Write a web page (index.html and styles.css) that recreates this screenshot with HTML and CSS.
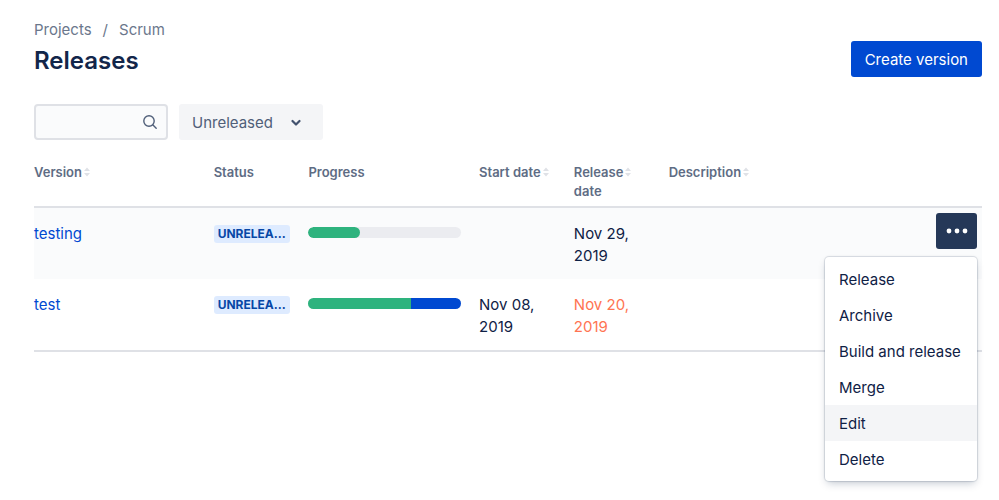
FILE: index.html
```html
<!DOCTYPE html>
<html lang="en">
<head>
<meta charset="utf-8">
<title>Releases</title>
<link rel="stylesheet" href="styles.css">
</head>
<body>
<svg class="sprite" aria-hidden="true">
  <symbol id="sort" viewBox="0 0 8 10"><path d="M4 0.5 7 4H1zM4 9.5 1 6h6z" fill="currentColor"/></symbol>
</svg>
<main class="page">
  <header class="page-header">
    <div>
      <nav class="breadcrumbs" aria-label="Breadcrumbs">
        <a href="#">Projects</a><span>/</span><a href="#">Scrum</a>
      </nav>
      <h1>Releases</h1>
    </div>
    <button class="primary" type="button">Create version</button>
  </header>

  <div class="filters">
    <div class="search">
      <input type="search" aria-label="Search versions">
      <svg width="16" height="16" viewBox="0 0 16 16" aria-hidden="true"><circle cx="7" cy="7" r="5.2"/><path d="M11 11 14.2 14.2"/></svg>
    </div>
    <div class="status-filter">
      <select aria-label="Version status"><option>Unreleased</option></select>
      <svg width="10" height="8" viewBox="0 0 10 8" aria-hidden="true"><path d="M1.5 2 5 5.5 8.5 2"/></svg>
    </div>
  </div>

  <table>
    <thead>
      <tr>
        <th class="wide">Version<svg class="sort"><use href="#sort"/></svg></th>
        <th class="narrow">Status</th>
        <th class="wide">Progress</th>
        <th class="narrow nowrap">Start date<svg class="sort"><use href="#sort"/></svg></th>
        <th class="narrow">Release<svg class="sort"><use href="#sort"/></svg> date</th>
        <th>Description<svg class="sort"><use href="#sort"/></svg></th>
        <th class="narrow" aria-label="Actions"></th>
      </tr>
    </thead>
    <tbody>
      <tr class="active">
        <td><a href="#">testing</a></td>
        <td><span class="lozenge">UNRELEA...</span></td>
        <td><div class="progress"><span class="done round" style="width:34%"></span></div></td>
        <td></td>
        <td>Nov 29, 2019</td>
        <td></td>
        <td class="actions">
          <div class="menu-anchor">
            <button class="more" type="button" aria-label="More actions" aria-expanded="true">
              <svg width="22" height="6" viewBox="0 0 22 6" aria-hidden="true"><circle cx="3" cy="3" r="2.4"/><circle cx="11" cy="3" r="2.4"/><circle cx="19" cy="3" r="2.4"/></svg>
            </button>
            <div class="menu" role="menu">
              <button type="button" role="menuitem">Release</button>
              <button type="button" role="menuitem">Archive</button>
              <button type="button" role="menuitem">Build and release</button>
              <button type="button" role="menuitem">Merge</button>
              <button type="button" role="menuitem" class="selected">Edit</button>
              <button type="button" role="menuitem">Delete</button>
            </div>
          </div>
        </td>
      </tr>
      <tr>
        <td><a href="#">test</a></td>
        <td><span class="lozenge">UNRELEA...</span></td>
        <td><div class="progress"><span class="done" style="width:67%"></span><span class="doing" style="width:33%"></span></div></td>
        <td>Nov 08, 2019</td>
        <td class="overdue">Nov 20, 2019</td>
        <td></td>
        <td></td>
      </tr>
    </tbody>
  </table>
</main>
</body>
</html>
```
FILE: styles.css
```css
* { box-sizing: border-box; }
body {
  margin: 0;
  background: #fff;
  color: #0f2145;
  font: 15px/22px Inter, "Liberation Sans", sans-serif;
}
button, input, select { font: inherit; }
button { border: 0; cursor: pointer; }
a { color: #0049d1; text-decoration: none; }
.sprite { position: absolute; width: 0; height: 0; }

.page { min-height: 100vh; padding: 19px 17px 18px 34px; }
.page-header { display: flex; justify-content: space-between; align-items: flex-end; }
.breadcrumbs { display: flex; gap: 11px; color: #6b778c; }
.breadcrumbs a { color: inherit; }
h1 { margin: 3px 0 0; font-size: 24px; line-height: 33px; font-weight: 600; color: #12264a; }
.primary {
  height: 36px;
  padding: 2px 14px 0;
  border-radius: 3px;
  background: #0049d1;
  color: #fff;
}

.filters { display: flex; gap: 11px; margin-top: 27px; }
.search { position: relative; width: 134px; height: 36px; }
.search input {
  width: 100%;
  height: 100%;
  padding: 0 32px 0 8px;
  border: 2px solid #dfe1e6;
  border-radius: 4px;
  background: #fafbfc;
  color: inherit;
  appearance: none;
}
.search svg {
  position: absolute;
  right: 10px;
  top: 10px;
  fill: none;
  stroke: #505f79;
  stroke-width: 1.4;
  stroke-linecap: round;
  pointer-events: none;
}
.status-filter { position: relative; }
.status-filter select {
  width: 144px;
  height: 36px;
  padding: 2px 36px 0 13px;
  border: 0;
  border-radius: 3px;
  background: #f4f5f7;
  color: #505f79;
  appearance: none;
}
.status-filter svg {
  position: absolute;
  right: 22px;
  top: 15px;
  fill: none;
  stroke: #42526e;
  stroke-width: 2.2;
  stroke-linecap: round;
  stroke-linejoin: round;
  pointer-events: none;
}

table {
  width: 100%;
  margin-top: 13px;
  table-layout: fixed;
  border-collapse: separate;
  border-spacing: 0;
}
.wide { width: 18%; }
.narrow { width: 10%; }
.nowrap { white-space: nowrap; }
th {
  padding: 10px 9px 5px;
  border-bottom: 2px solid #dfe1e6;
  font-size: 13px;
  line-height: 19px;
  font-weight: 600;
  color: #5e6c84;
  text-align: left;
  vertical-align: top;
}
td { height: 71px; padding: 15px 9px 12px; vertical-align: top; }
th:first-child, td:first-child { padding-left: 0; }
tbody tr:last-child td { height: 73px; border-bottom: 2px solid #dfe1e6; }
.active { background: #fafbfc; }
tbody .overdue { color: #ff7452; }
.sort { width: 8px; height: 10px; margin-left: 1px; color: #dfe1e6; }

.lozenge {
  display: block;
  height: 18px;
  margin-top: 2px;
  padding: 0 4px;
  border-radius: 3px;
  background: #deebff;
  color: #0747a6;
  font-size: 12px;
  line-height: 18px;
  font-weight: 700;
  white-space: nowrap;
}
.progress {
  display: flex;
  height: 11px;
  margin-top: 4px;
  overflow: hidden;
  border-radius: 6px;
  background: #ebecf0;
}
.done { background: #2eb37e; }
.doing { background: #0049d1; }
.round { border-radius: 6px; }

.actions { padding: 5px; }
.menu-anchor { position: relative; display: flex; justify-content: flex-end; }
.more {
  display: flex;
  align-items: center;
  justify-content: center;
  width: 41px;
  height: 36px;
  padding: 0;
  border-radius: 3px;
  background: #253858;
}
.more svg { fill: #fff; }
.menu {
  position: absolute;
  top: 44px;
  right: 0;
  z-index: 1;
  min-width: 152px;
  padding: 4px 0;
  border-radius: 4px;
  background: #fff;
  box-shadow: 0 4px 8px -2px rgba(9, 30, 66, 0.25), 0 0 1px 1px rgba(9, 30, 66, 0.14);
}
.menu button {
  display: block;
  width: 100%;
  height: 36px;
  padding: 2px 14px 0;
  background: none;
  color: inherit;
  text-align: left;
  white-space: nowrap;
}
.menu .selected { background: #f4f5f7; }
```
